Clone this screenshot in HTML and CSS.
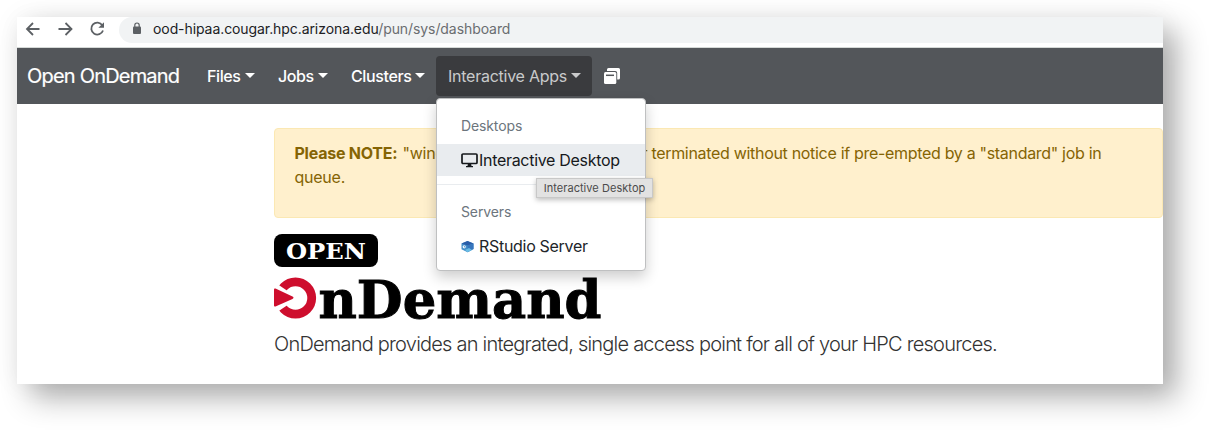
FILE: index.html
```html
<!DOCTYPE html>
<html lang="en">
<head>
<meta charset="utf-8">
<title>Dashboard - Open OnDemand</title>
<link rel="stylesheet" href="styles.css">
</head>
<body>
<div class="window">
  <div class="toolbar">
    <svg class="nav-icons" width="92" height="24" viewBox="0 0 92 24" fill="none" stroke="#5c6064" stroke-width="1.8">
      <path d="M22.500 12H10.500M16 6l-6 6 6 6M41.500 12H54M48.500 6l6 6-6 6"/>
      <path d="M85.300 8.200A6 6 0 1 0 86 13.500"/>
      <path d="M87 5.200v5.600h-5.600z" fill="#5c6064" stroke="none"/>
    </svg>
    <div class="address">
      <svg class="lock" width="10" height="13" viewBox="0 0 10 13"><rect x="1" y="4.500" width="8" height="7.500" rx="1" fill="#5c6064"/><path d="M2.800 5V3.200a2.200 2.200 0 0 1 4.400 0V5" fill="none" stroke="#5c6064" stroke-width="1.200"/></svg>
      <span class="url">ood-hipaa.cougar.hpc.arizona.edu<span class="path">/pun/sys/dashboard</span></span>
    </div>
  </div>
  <nav class="navbar">
    <span class="brand">Open OnDemand</span>
    <span class="item files"><span>Files</span><i class="caret"></i></span>
    <span class="item jobs"><span>Jobs</span><i class="caret"></i></span>
    <span class="item clusters"><span>Clusters</span><i class="caret"></i></span>
    <div class="item open"><span>Interactive Apps</span><i class="caret"></i>
      <div class="menu">
        <div class="header">Desktops</div>
        <div class="entry active">
          <svg width="17" height="16" viewBox="0 0 17 16"><rect x="1" y="2" width="15" height="9.500" rx="1" fill="none" stroke="#16191c" stroke-width="1.700"/><path d="M7 11h3l.5 3H12v1.200H5V14h1.500z" fill="#16191c"/></svg>
          <span class="label-desktop">Interactive Desktop</span>
        </div>
        <div class="divider"></div>
        <div class="header servers">Servers</div>
        <div class="entry">
          <svg class="cube" width="13" height="14" viewBox="0 0 13 14"><path d="M6.500 2l6 2.500v5.500l-6 3.300-6-3V4.500z" fill="#438ec8"/><path d="M6.500 2l6 2.500-6 2-6-2z" fill="#2a5da8"/><path d="M6.500 6.500l6-2V10l-6 3.300z" fill="#3776bd"/><path d="M4 11l4-2 3 2-4.500 2.300z" fill="#69bce4"/><circle cx="3.200" cy="7.800" r="1.600" fill="#f0f8ff"/><circle cx="3.500" cy="7.800" r=".5" fill="#245693"/></svg>
          <span class="label-server">RStudio Server</span>
        </div>
        <div class="tooltip">Interactive Desktop</div>
      </div>
    </div>
    <svg class="sessions" width="18" height="18" viewBox="0 0 18 18"><path d="M5.500 1h10a1.500 1.500 0 0 1 1.500 1.500V11a1.500 1.500 0 0 1-1.500 1.500h-1.300V6A2 2 0 0 0 12.200 4H4V2.500A1.500 1.500 0 0 1 5.500 1z" fill="#fff"/><rect x="1" y="5" width="12.300" height="12" rx="1.500" fill="#fff"/><path d="M3 8.300h8" stroke="#53565a" stroke-width="1.500"/></svg>
  </nav>
  <main class="content">
    <div class="alert"><div class="line"><b>Please NOTE:</b><span class="start">"wind</span><span class="rest">r terminated without notice if pre-empted by a "standard" job in</span></div><div>queue.</div></div>
    <svg class="logo" width="334" height="90" viewBox="0 0 334 90">
      <rect x="0" y="1" width="104" height="33" rx="8" fill="#000"/>
      <text class="slab" x="12" y="25.500" font-size="23" textLength="80" lengthAdjust="spacingAndGlyphs" fill="#fff">OPEN</text>
      <circle cx="21.500" cy="65" r="16.200" fill="none" stroke="#ce0e2d" stroke-width="8.800"/>
      <path d="M-3 50L4 51.500L24 65L4 78.500L-3 80Z" fill="#fff"/>
      <path d="M1.500 55.600Q0 55 0 56.500V72.500Q0 74 1.500 73.400L18.500 66Q20.500 64.800 18.500 63.600Z" fill="#ce0e2d"/>
      <text class="slab wordmark" x="44.500" y="84.500" font-size="52.500" textLength="283" lengthAdjust="spacingAndGlyphs">nDemand</text>
    </svg>
    <p class="tagline">OnDemand provides an integrated, single access point for all of your HPC resources.</p>
  </main>
</div>
</body>
</html>
```
FILE: styles.css
```css
* { box-sizing: border-box; }
body { margin: 0; padding: 17px; height: 432px; overflow: hidden; background: #fff; font-family: Inter, sans-serif; font-size: 16px; }
svg { flex: none; display: block; }
.window { width: 1146px; height: 367px; background: #fff; box-shadow: 14px 14px 28px rgba(0,0,0,.31), 0 0 26px rgba(0,0,0,.06); }
.toolbar { height: 31px; display: flex; align-items: flex-start; border-bottom: 1px solid #d5d9d7; }
.nav-icons { margin-right: 10px; }
.address { flex: 1; height: 26px; display: flex; align-items: center; padding: 0 0 3px 13px; background: #f1f3f4; border-radius: 13px 0 0 13px; }
.lock { margin-right: 11px; }
.url { font-size: 14px; color: #202124; white-space: nowrap; letter-spacing: -.08px; }
.path { color: #6a6d70; }
.navbar { height: 56px; background: #53565a; color: #fff; display: flex; align-items: center; padding-left: 10px; white-space: nowrap; }
.brand { width: 168px; font-size: 20px; letter-spacing: -.8px; -webkit-text-stroke: .2px currentColor; }
.item { display: flex; align-items: center; height: 40px; padding: 0 12px; gap: 4px; letter-spacing: -.38px; font-weight: 500; }
.files { width: 71px; }
.jobs { width: 73px; }
.clusters { width: 97px; }
.caret { border: 5px solid transparent; border-top-color: currentColor; border-bottom: 0; margin-top: -1px; }
.open { width: 156px; position: relative; background: #3a3b3e; border-radius: 4px; color: #c9cacb; font-weight: 400; letter-spacing: -.25px; }
.sessions { margin-left: 11px; }
.menu { position: absolute; left: 0; top: 42px; width: 210px; height: 173px; z-index: 2; padding-top: 15px; background: #fff; border: 1px solid #bfc0c1; border-radius: 4px; box-shadow: 0 6px 14px rgba(0,0,0,.2); color: #212529; font-weight: 400; letter-spacing: -.3px; }
.header { height: 30px; padding: 4px 24px; font-size: 14px; line-height: 16px; color: #6c757d; letter-spacing: -.12px; }
.entry { height: 32px; display: flex; align-items: center; gap: 1px; padding: 0 24px; }
.active { background: #e9ecef; color: #16191c; }
.divider { height: 1px; margin: 8px 0; background: #e9ecef; }
.servers { padding-top: 11px; height: 37px; }
.cube { margin-right: 4px; }
.tooltip { position: absolute; left: 99px; top: 79px; width: 117px; height: 20px; text-align: center; background: #e2e2e2; border: 1px solid #c8c8c8; box-shadow: 0 2px 5px rgba(0,0,0,.25); font-size: 11px; line-height: 18px; letter-spacing: .05px; color: #4b4b4b; }
.content { padding: 24px 0 0 257px; }
.alert { height: 90px; padding: 12px 19.5px; border: 1px solid #fbe8b3; border-radius: 4px; background: #fff0cd; color: #856404; line-height: 24px; white-space: nowrap; letter-spacing: -.25px; }
.line { display: flex; }
.line b { width: 108px; }
.start { width: 239px; }
.rest { letter-spacing: -.31px; }
.logo { margin-top: 15px; }
.slab { font-family: "DejaVu Serif", serif; font-weight: 700; }
.wordmark { stroke: #000; stroke-width: 1px; }
.tagline { margin: 9px 0 0; font-size: 20px; font-weight: 300; line-height: 24px; letter-spacing: -.78px; color: #333; white-space: nowrap; }
```
